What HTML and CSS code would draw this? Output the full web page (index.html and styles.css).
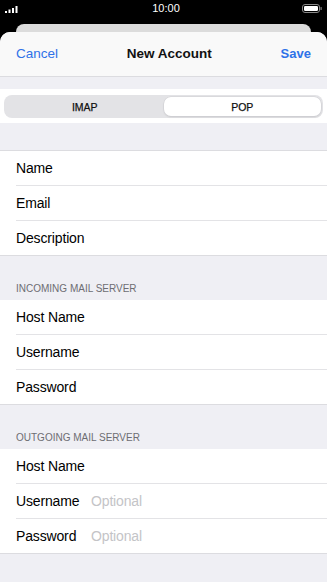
FILE: index.html
```html
<!DOCTYPE html>
<html lang="en">
<head>
  <meta charset="UTF-8">
  <title>New Account</title>
  <link rel="stylesheet" href="styles.css">
</head>
<body>
  <div class="status-bar">
    <svg class="signal" width="13" height="7" viewBox="0 0 13 7">
      <rect x="0" y="5" width="2" height="2" fill="#fff"/>
      <rect x="3.5" y="3.5" width="2" height="3.5" fill="#fff"/>
      <rect x="7" y="2" width="2" height="5" fill="#fff"/>
      <rect x="10.5" y="0" width="2" height="7" fill="#fff"/>
    </svg>
    <span class="time">10:00</span>
    <svg class="battery" width="20" height="9" viewBox="0 0 20 9">
      <rect x="0.5" y="0.5" width="17" height="8" rx="2.5" fill="none" stroke="#888" stroke-width="1"/>
      <rect x="2" y="2" width="14" height="5" rx="1.2" fill="#fff"/>
      <rect x="18.5" y="3" width="1.2" height="3" rx="0.5" fill="#888"/>
    </svg>
  </div>

  <div class="back-card"></div>

  <div class="sheet">
    <div class="nav">
      <span class="nav-btn">Cancel</span>
      <span class="nav-title">New Account</span>
      <span class="nav-btn save">Save</span>
    </div>

    <div class="gap-small"></div>

    <div class="segment-row">
      <div class="segment">
        <div class="seg-item">IMAP</div>
        <div class="seg-item active">POP</div>
      </div>
    </div>

    <div class="gap-mid"></div>

    <ul class="group">
      <li class="row"><span class="label">Name</span></li>
      <li class="row"><span class="label">Email</span></li>
      <li class="row"><span class="label">Description</span></li>
    </ul>

    <div class="group-header">INCOMING MAIL SERVER</div>
    <ul class="group">
      <li class="row"><span class="label">Host Name</span></li>
      <li class="row"><span class="label">Username</span></li>
      <li class="row"><span class="label">Password</span></li>
    </ul>

    <div class="group-header">OUTGOING MAIL SERVER</div>
    <ul class="group">
      <li class="row"><span class="label">Host Name</span></li>
      <li class="row"><span class="label">Username</span><span class="placeholder">Optional</span></li>
      <li class="row"><span class="label">Password</span><span class="placeholder">Optional</span></li>
    </ul>

    <div class="bottom-space"></div>
  </div>
</body>
</html>
```

FILE: styles.css
```css
* {
  box-sizing: border-box;
  margin: 0;
  padding: 0;
}

body {
  background: #000;
  font-family: "Liberation Sans", Arial, sans-serif;
  width: 327px;
  height: 582px;
  overflow: hidden;
}

.status-bar {
  height: 24px;
  display: flex;
  align-items: center;
  justify-content: space-between;
  padding: 0 5px 8px 5px;
  color: #fff;
}

.signal {
  margin-top: 2px;
}

.time {
  font-size: 11px;
  margin-left: 12px;
}

.battery {
  margin-top: 1px;
}

.back-card {
  height: 8px;
  margin: 0 16px;
  background: #dcdcdc;
  border-radius: 10px 10px 0 0;
}

.sheet {
  background: #efeff4;
  border-radius: 10px 10px 0 0;
  overflow: hidden;
  height: 550px;
}

.nav {
  height: 45px;
  display: flex;
  align-items: center;
  justify-content: space-between;
  padding: 0 16px 2px 16px;
  background: #f9f9f9;
  border-bottom: 1px solid #dcdce0;
}

.nav-btn {
  color: #2f72e8;
  font-size: 13.5px;
}

.save {
  font-weight: bold;
  font-size: 13px;
}

.nav-title {
  font-size: 13.5px;
  font-weight: bold;
  color: #111;
}

.gap-small {
  height: 12px;
}

.segment-row {
  background: #fff;
  height: 34px;
  padding: 6px 4px 5px 4px;
}

.segment {
  display: flex;
  height: 23px;
  background: #e3e3e6;
  border-radius: 8px;
  padding: 2px;
}

.seg-item {
  flex: 1;
  display: flex;
  align-items: center;
  justify-content: center;
  font-size: 10.5px;
  color: #111;
  border-radius: 7px;
  -webkit-text-stroke: 0.25px #111;
}

.seg-item.active {
  background: #fff;
  box-shadow: 0 0 0 0.5px #d0d0d4, 0 1px 2px rgba(0, 0, 0, 0.12);
}

.gap-mid {
  height: 28px;
  border-bottom: 1px solid #dcdce0;
}

.group {
  list-style: none;
  background: #fff;
  border-bottom: 1px solid #dcdce0;
}

.row {
  height: 35px;
  margin-left: 16px;
  display: flex;
  align-items: center;
  border-bottom: 1px solid #e3e3e6;
  font-size: 14px;
  color: #000;
}

.row:last-child {
  border-bottom: none;
  height: 34px;
}

.label {
  min-width: 75px;
  letter-spacing: -0.15px;
}

.placeholder {
  color: #c4c4c7;
  letter-spacing: -0.15px;
}

.group-header {
  height: 44px;
  display: flex;
  align-items: flex-end;
  padding: 0 16px 6px 16px;
  font-size: 10px;
  color: #6d6d72;
}

.bottom-space {
  height: 30px;
}
```
